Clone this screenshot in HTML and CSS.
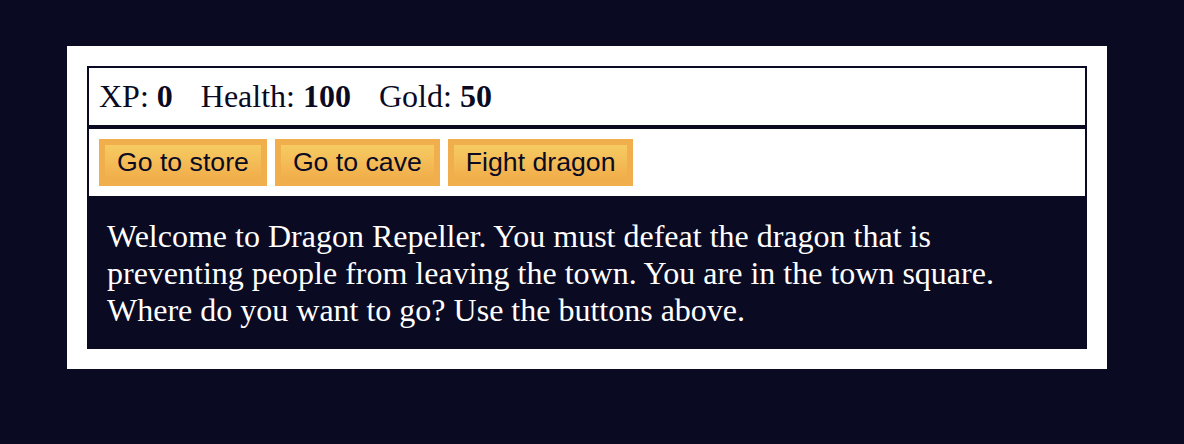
FILE: index.html
```html
<!DOCTYPE html>
<html lang="en">
<head>
<meta charset="utf-8">
<title>RPG - Dragon Repeller</title>
<link rel="stylesheet" href="styles.css">
</head>
<body>
<div class="game">
  <div class="stats">
    <span class="stat">XP: <strong>0</strong></span>
    <span class="stat">Health: <strong>100</strong></span>
    <span class="stat">Gold: <strong>50</strong></span>
  </div>
  <div class="controls">
    <button class="btn">Go to store</button>
    <button class="btn">Go to cave</button>
    <button class="btn">Fight dragon</button>
  </div>
  <div class="text">Welcome to Dragon Repeller. You must defeat the dragon that is preventing people from leaving the town. You are in the town square. Where do you want to go? Use the buttons above.</div>
</div>
</body>
</html>
```

FILE: styles.css
```css
html, body {
  margin: 0;
  padding: 0;
}
body {
  background-color: #0a0a23;
  font-family: "Liberation Serif", "Times New Roman", serif;
  font-size: 32px;
  overflow: hidden;
}
.game {
  width: 1000px;
  background-color: #ffffff;
  color: #ffffff;
  margin: 46px 0 0 67px;
  padding: 20px;
}
.stats, .controls {
  border: 2px solid #0a0a23;
  padding: 10px;
  color: #0a0a23;
}
.stat {
  padding-right: 20px;
}
.btn {
  cursor: pointer;
  font-family: "Liberation Sans", Arial, sans-serif;
  font-size: 26.667px;
  color: #0a0a23;
  background-color: #f0ae4c;
  background-image: linear-gradient(#f6cb62, #f1ad4a);
  border: 6px solid #f0ae4c;
  padding: 2px 12px;
  margin: 0;
  vertical-align: top;
}
.text {
  background-color: #0a0a23;
  color: #ffffff;
  padding: 20px;
}
```
